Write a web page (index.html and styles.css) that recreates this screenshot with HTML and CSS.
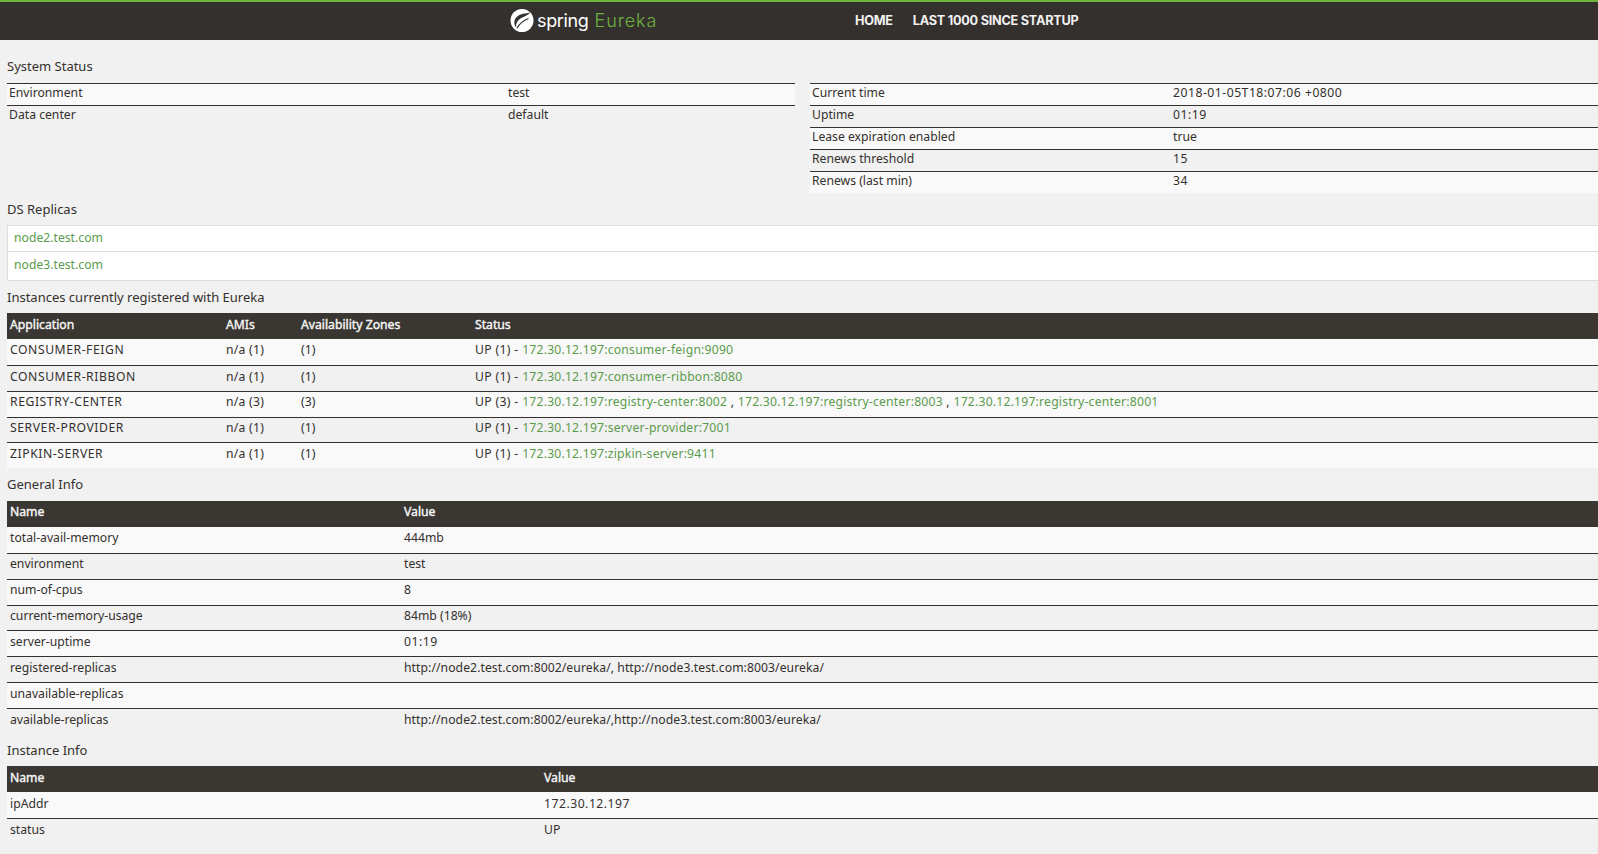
FILE: index.html
```html
<!DOCTYPE html>
<html lang="en">
<head>
<meta charset="utf-8">
<title>Eureka</title>
<link rel="stylesheet" href="styles.css">
</head>
<body>
<nav class="navbar">
  <a class="brand">
    <svg class="logo" viewBox="0 0 24 24" width="24" height="24" aria-hidden="true">
      <circle cx="12" cy="12.5" r="11.5" fill="#fff"/>
      <path d="M23 0.5 L17.5 0 C19 2 21 3.5 23 5Z" fill="#34302d"/>
      <path d="M20.5 4.2C16 6 9.5 4.8 5.8 10 3.8 12.8 3.8 16.8 6.2 19.4 5.6 15.6 7.4 12.6 10.4 10.6 13.6 8.5 17.4 7.6 20.5 4.2Z" fill="#34302d"/>
      <path d="M7 20.2C9.5 15.8 13.5 12.6 18.5 10.6" fill="none" stroke="#34302d" stroke-width="1.1"/>
    </svg>
    <span class="brand-spring">spring</span>
    <span class="brand-eureka">Eureka</span>
  </a>
  <ul class="nav-links">
    <li>HOME</li>
    <li>LAST 1000 SINCE STARTUP</li>
  </ul>
</nav>
<main class="content">
  <h1>System Status</h1>
  <div class="status-row">
    <table class="tbl stat stat-left">
      <tr><td class="c-env">Environment</td><td>test</td></tr>
      <tr><td>Data center</td><td>default</td></tr>
    </table>
    <table class="tbl stat stat-right">
      <tr><td class="c-cur">Current time</td><td class="num">2018-01-05T18:07:06 +0800</td></tr>
      <tr><td>Uptime</td><td class="num">01:19</td></tr>
      <tr><td>Lease expiration enabled</td><td>true</td></tr>
      <tr><td>Renews threshold</td><td class="num">15</td></tr>
      <tr><td>Renews (last min)</td><td class="num">34</td></tr>
    </table>
  </div>
  <h1>DS Replicas</h1>
  <ul class="replicas">
    <li><a>node2.test.com</a></li>
    <li><a>node3.test.com</a></li>
  </ul>
  <h1>Instances currently registered with Eureka</h1>
  <table class="tbl data">
    <thead><tr><th class="c-app">Application</th><th class="c-ami">AMIs</th><th class="c-az">Availability Zones</th><th>Status</th></tr></thead>
    <tbody>
      <tr><td class="caps">CONSUMER-FEIGN</td><td class="ami">n/a (1)</td><td>(1)</td><td class="status">UP (1) - <a>172.30.12.197:consumer-feign:9090</a></td></tr>
      <tr><td class="caps">CONSUMER-RIBBON</td><td class="ami">n/a (1)</td><td>(1)</td><td class="status">UP (1) - <a>172.30.12.197:consumer-ribbon:8080</a></td></tr>
      <tr><td class="caps">REGISTRY-CENTER</td><td class="ami">n/a (3)</td><td>(3)</td><td class="status">UP (3) - <a>172.30.12.197:registry-center:8002</a> , <a>172.30.12.197:registry-center:8003</a> , <a>172.30.12.197:registry-center:8001</a></td></tr>
      <tr><td class="caps">SERVER-PROVIDER</td><td class="ami">n/a (1)</td><td>(1)</td><td class="status">UP (1) - <a>172.30.12.197:server-provider:7001</a></td></tr>
      <tr><td class="caps">ZIPKIN-SERVER</td><td class="ami">n/a (1)</td><td>(1)</td><td class="status">UP (1) - <a>172.30.12.197:zipkin-server:9411</a></td></tr>
    </tbody>
  </table>
  <h1>General Info</h1>
  <table class="tbl data">
    <thead><tr><th class="c-gen">Name</th><th>Value</th></tr></thead>
    <tbody>
      <tr><td>total-avail-memory</td><td>444mb</td></tr>
      <tr><td>environment</td><td>test</td></tr>
      <tr><td>num-of-cpus</td><td class="num">8</td></tr>
      <tr><td>current-memory-usage</td><td>84mb (18%)</td></tr>
      <tr><td>server-uptime</td><td class="num">01:19</td></tr>
      <tr><td>registered-replicas</td><td class="url">http://node2.test.com:8002/eureka/, http://node3.test.com:8003/eureka/</td></tr>
      <tr><td>unavailable-replicas</td><td></td></tr>
      <tr><td>available-replicas</td><td class="url">http://node2.test.com:8002/eureka/,http://node3.test.com:8003/eureka/</td></tr>
    </tbody>
  </table>
  <h1>Instance Info</h1>
  <table class="tbl data">
    <thead><tr><th class="c-inst">Name</th><th>Value</th></tr></thead>
    <tbody>
      <tr><td>ipAddr</td><td class="num">172.30.12.197</td></tr>
      <tr><td>status</td><td>UP</td></tr>
    </tbody>
  </table>
</main>
</body>
</html>
```
FILE: styles.css
```css
html, body { margin: 0; padding: 0; }
body {
  background: #f1f1f1;
  color: #34302d;
  font-family: "Noto Sans", "Open Sans", sans-serif;
  font-size: 12.2px;
  overflow: hidden;
  height: 854px;
}
a { color: #5b9b4d; letter-spacing: 0.2px; }

.navbar {
  display: flex;
  align-items: center;
  height: 38px;
  background: #34302d;
  border-top: 2px solid #6db33f;
  padding-left: 510px;
}
.brand { display: flex; align-items: center; width: 345px; color: #fff; padding-bottom: 2px; }
.logo { display: block; margin-right: 3px; }
.brand-spring { font-family: Inter, sans-serif; font-weight: 400; font-size: 18px; letter-spacing: -0.35px; color: #fff; margin-right: 6px; }
.brand-eureka { font-family: Inter, sans-serif; font-weight: 300; font-size: 18px; color: #6db33f; letter-spacing: 0.9px; }
.nav-links {
  display: flex;
  gap: 20px;
  list-style: none;
  margin: 0;
  padding: 0 0 2px;
  font-family: Inter, sans-serif;
  font-weight: 700;
  font-size: 12.7px;
  color: #f1f1f1;
  letter-spacing: -0.25px;
}

.content { padding: 17.5px 0 0 7px; }
h1 {
  margin: 0;
  font-size: 13px;
  font-weight: 400;
  line-height: 17px;
  padding-bottom: 7.5px;
}
.content > h1:first-child { padding-bottom: 8.5px; }
.status-row { display: flex; gap: 15px; margin-right: -1px; margin-bottom: 7.5px; }
.tbl { border-collapse: collapse; border-spacing: 0; }
.tbl td, .tbl th { padding: 0 3px; text-align: left; vertical-align: middle; }
.stat { align-self: flex-start; }
.stat-left { width: 788px; }
.stat-right { flex: 1; }
.tbl.stat td { height: 17px; padding: 0 2px 4px; border-top: 1px solid #34302d; }
.stat tr:nth-child(odd) { background: #f9f9f9; }
.c-env { width: 495px; }
.c-cur { width: 357px; }
.num { letter-spacing: 0.5px; }
.caps { letter-spacing: 0.55px; }
.url { letter-spacing: 0.06px; }
.ami { letter-spacing: 0.25px; }
.status { letter-spacing: 0.35px; }

.replicas { list-style: none; margin: 0 0 7.5px; padding: 0; }
.replicas li {
  height: 27px;
  box-sizing: border-box;
  padding: 0 6px;
  line-height: 24px;
  background: #fff;
  border: 1px solid #ddd;
  border-right: 0;
}
.replicas li + li { margin-top: -1px; height: 30px; line-height: 26px; }
.replicas a { letter-spacing: 0; }

.data { width: 100%; margin-bottom: 8.25px; }
.tbl.data th {
  height: 22px;
  padding-bottom: 4px;
  background: #3a3632;
  color: #f6f6f6;
  font-weight: 400;
  -webkit-text-stroke: 0.4px #f6f6f6;
}
.tbl.data td { height: 20.35px; padding-bottom: 4.5px; border-top: 1px solid #34302d; }
.tbl.data tbody tr:first-child td { border-top: 0; height: 21.35px; }
.data tbody tr:nth-child(odd) { background: #f9f9f9; }
.c-app { width: 210px; }
.c-ami { width: 69px; }
.c-az { width: 168px; }
.c-gen { width: 388px; }
.c-inst { width: 528px; }
```
